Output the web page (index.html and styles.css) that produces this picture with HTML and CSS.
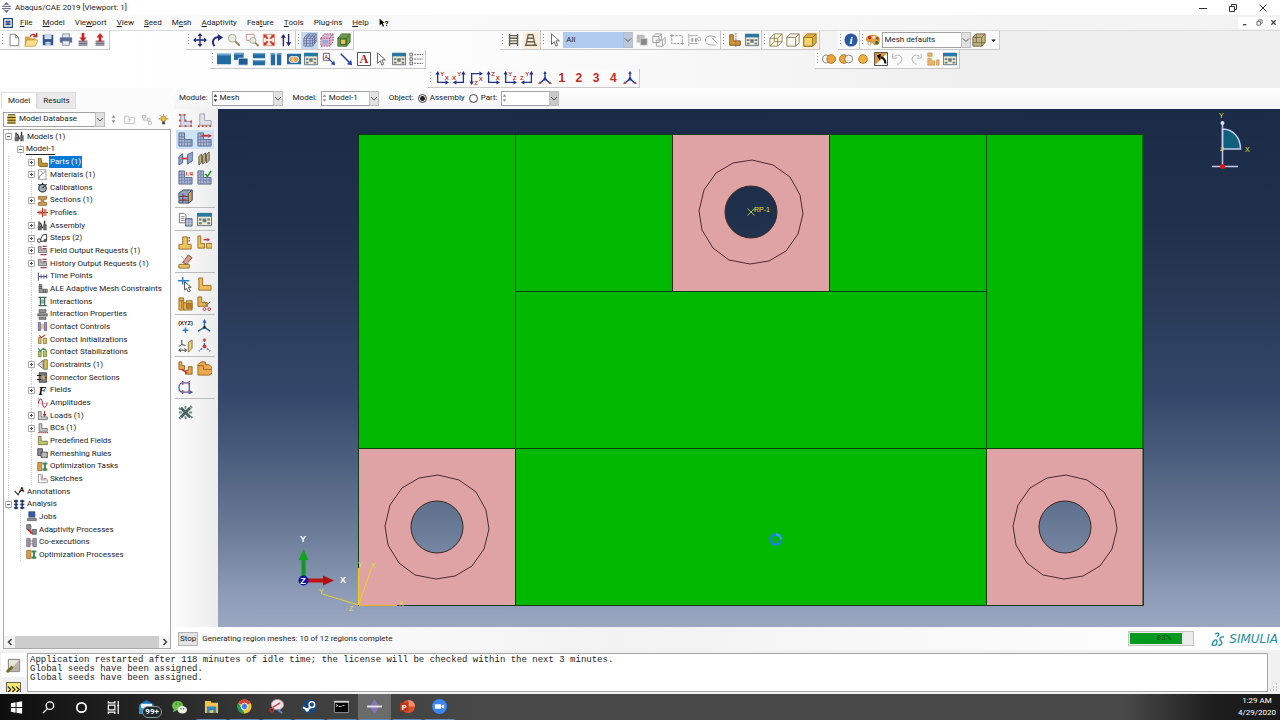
FILE: index.html
```html
<!DOCTYPE html>
<html lang="en">
<head>
<meta charset="utf-8">
<title>Abaqus/CAE 2019 [Viewport: 1]</title>
<link rel="stylesheet" href="styles.css">
</head>
<body>
<svg class="defs" aria-hidden="true">
  <!-- general -->
  <symbol id="app" viewBox="0 0 16 16"><path d="M8 0l3 3v2l2 0 3 3-3 3h-2v2l-3 3-3-3v-2H3L0 8l3-3h2V3z" fill="#77759c"/><path d="M0 8h16M5 5h6M5 11h6" stroke="#fff" stroke-width="1.4"/></symbol>
  <symbol id="doc" viewBox="0 0 16 16"><path d="M1 1h14v14H1z" fill="#fff" stroke="#27457f" stroke-width="2"/><path d="M4 6h8M4 10h8" stroke="#27457f" stroke-width="3"/></symbol>
  <symbol id="chev" viewBox="0 0 8 8"><path d="M1 2.500l3 3 3-3" fill="none" stroke="#555"/></symbol>
  <symbol id="new" viewBox="0 0 16 16"><path d="M3.500 1.500h6l4 4v9h-10z" fill="#fff" stroke="#777"/><path d="M9.500 1.500v4h4" fill="none" stroke="#777"/></symbol>
  <symbol id="open" viewBox="0 0 16 16"><path d="M1 4h5l1 2h6v9H1z" fill="#d9a53f"/><path d="M3 8h13l-3 7H1z" fill="#ffe08a" stroke="#a87c20" stroke-width=".6"/><path d="M7 4c2-3 5-3 6-1M14.500 0v4h-4" fill="none" stroke="#b3261e" stroke-width="1.500"/></symbol>
  <symbol id="save" viewBox="0 0 16 16"><path d="M2 2h12v12H2z" fill="#31538b"/><path d="M4 2h8v5H4z" fill="#cfdbe8"/><path d="M5 10h6v4H5z" fill="#b9c8d8"/></symbol>
  <symbol id="print" viewBox="0 0 16 16"><path d="M4 1h8v5H4z" fill="#dfe5ee" stroke="#68708c" stroke-width=".8"/><path d="M1 5h14v6H1z" fill="#5e6b9a"/><path d="M4 9h8v5H4z" fill="#e8ecf4" stroke="#68708c" stroke-width=".8"/></symbol>
  <symbol id="dbin" viewBox="0 0 16 16"><path d="M3 8h10v6H3z" fill="#b9b9c2"/><path d="M3 10h10M3 12h10M3 14h10" stroke="#55566a" stroke-width=".9"/><path d="M6.500 0h3v5H12L8 10 4 5h2.500z" fill="#d3201c"/></symbol>
  <symbol id="dbout" viewBox="0 0 16 16"><path d="M3 8h10v6H3z" fill="#b9b9c2"/><path d="M3 10h10M3 12h10M3 14h10" stroke="#55566a" stroke-width=".9"/><path d="M6.500 10h3V5H12L8 0 4 5h2.500z" fill="#d3201c"/></symbol>
  <!-- view manipulation -->
  <symbol id="pan" viewBox="0 0 16 16"><path d="M8 2v12M2 8h12" stroke="#262a76" stroke-width="1.500"/><path d="M8 0l3 3.500H5zM8 16l3-3.500H5zM0 8l3.500-3v6zM16 8l-3.500-3v6z" fill="#262a76"/></symbol>
  <symbol id="rot" viewBox="0 0 16 16"><path d="M5 15C1 9 5 4 10 5" fill="none" stroke="#262a76" stroke-width="2.200"/><path d="M9 1l6 4-6 4z" fill="#262a76"/></symbol>
  <symbol id="mag" viewBox="0 0 16 16"><circle cx="6" cy="6" r="4.500" fill="#e6ebe0" stroke="#a6a78e"/><path d="M9.500 9.500l5 5" stroke="#9d7a50" stroke-width="2.200"/></symbol>
  <symbol id="magbox" viewBox="0 0 16 16"><path d="M1.500 1.500h9v7h-9z" fill="none" stroke="#c88"/><circle cx="9" cy="8.500" r="3.500" fill="#e6ebe0" stroke="#a6a78e"/><path d="M11.500 11l4 4" stroke="#9d7a50" stroke-width="2"/></symbol>
  <symbol id="fit" viewBox="0 0 16 16"><path d="M1.500 1.500h13v13h-13z" fill="#ffe9df" stroke="#d8957c"/><path d="M3 3l3.500 3.500M13 3L9.500 6.500M3 13l3.500-3.500M13 13L9.500 9.500" stroke="#c9302c" stroke-width="2"/><path d="M2 2h4L2 6zM14 2h-4l4 4zM2 14h4l-4-4zM14 14h-4l4-4z" fill="#c9302c"/></symbol>
  <symbol id="updn" viewBox="0 0 16 16"><path d="M5 15V4M11 1v11" stroke="#262a76" stroke-width="1.600"/><path d="M5 1l3 4.500H2zM11 15l3-4.500H8z" fill="#262a76"/></symbol>
  <symbol id="meshcube" viewBox="0 0 16 16"><path d="M5 1h10v9l-4 5H1V6z" fill="#b8c8e6"/><path d="M1 6h10v9H1zM1 6l4-5h10l-4 5M15 1v9l-4 5M4 6v9M8 6v9M1 9h10M1 12h10M3 3.500h10M13 3.500v9M8 1L4 6M12 1L8 6M11 9l4-4M11 12l4-4" fill="none" stroke="#4f5f8b" stroke-width=".8"/></symbol>
  <symbol id="pinkcube" viewBox="0 0 16 16"><path d="M5 1h10v9l-4 5H1V6z" fill="#d8b7cf"/><path d="M1 6h10v9H1zM1 6l4-5h10l-4 5M15 1v9l-4 5" fill="none" stroke="#a2527f" stroke-dasharray="2 1"/><path d="M3 8h6v5H3z" fill="#9aa9d8"/></symbol>
  <symbol id="greencube" viewBox="0 0 16 16"><path d="M5 1h10v9l-4 5H1V6z" fill="#6e9d4c" stroke="#3f6b2c"/><path d="M1 6h10v9M11 6l4-5" fill="none" stroke="#3f6b2c"/><path d="M4 7h6v6H4z" fill="#e3c65e" stroke="#3b5f2b"/></symbol>
  <!-- windows -->
  <symbol id="w1" viewBox="0 0 16 16"><path d="M0 2h16v12H0z" fill="#266aa4"/><path d="M0 2h16v2H0z" fill="#6ba2cb"/></symbol>
  <symbol id="w2" viewBox="0 0 16 16"><path d="M0 1h11v8H0z" fill="#266aa4"/><path d="M5 7h11v8H5z" fill="#1e5c93" stroke="#d5e6f3"/><path d="M0 1h11v2H0z" fill="#6ba2cb"/></symbol>
  <symbol id="w3" viewBox="0 0 16 16"><path d="M1 1h14v6H1zM1 9h14v6H1z" fill="#266aa4"/><path d="M1 1h14v1.500H1zM1 9h14v1.500H1z" fill="#6ba2cb"/></symbol>
  <symbol id="w4" viewBox="0 0 16 16"><path d="M2 1h5v14H2zM9 1h5v14H9z" fill="#266aa4"/><path d="M2 1h5v2H2zM9 1h5v2H9z" fill="#6ba2cb"/></symbol>
  <symbol id="w5" viewBox="0 0 16 16"><path d="M0 2h16v12H0z" fill="#266aa4"/><circle cx="6" cy="8.500" r="3.500" fill="#e6a24b" stroke="#fff"/><circle cx="10" cy="8.500" r="3.500" fill="#e6a24b" stroke="#fff"/></symbol>
  <symbol id="form" viewBox="0 0 16 16"><path d="M.5 1.500h15v13H.5z" fill="#eee9cf" stroke="#5d6d79"/><path d="M0 1h16v4H0z" fill="#2878a6"/><path d="M2 7h3v2H2zM6 7h4v4H6zM11 7h3v2h-3zM2 11h3v2H2zM11 11h3v2h-3z" fill="#6a7c86"/></symbol>
  <symbol id="abox" viewBox="0 0 16 16"><path d="M1.500 1.500h7v8h-7z" fill="#fff" stroke="#555"/><text x="2.500" y="8.500" font-size="7" fill="#8a1c1c">A</text><path d="M7 7l6 6" stroke="#2747a0" stroke-width="1.500"/><path d="M15 15l-1-5-4 4z" fill="#2747a0"/></symbol>
  <symbol id="diag" viewBox="0 0 16 16"><path d="M2 2l10 10" stroke="#2747a0" stroke-width="1.800"/><path d="M15 15l-1-6-5 5z" fill="#2747a0"/></symbol>
  <symbol id="abig" viewBox="0 0 16 16"><path d="M.5 .5h15v15H.5z" fill="#fff" stroke="#333"/><text x="8" y="13" font-size="14" font-weight="bold" text-anchor="middle" font-family="Liberation Serif, serif" fill="#b01818">A</text></symbol>
  <symbol id="cursor" viewBox="0 0 16 16"><path d="M4 1v12l3-3 2 5 2-1-2-5h4z" fill="#fff" stroke="#555"/></symbol>
  <symbol id="list" viewBox="0 0 16 16"><path d="M1 1.500h3v3H1zM1 6.500h3v3H1zM1 11.500h3v3H1z" fill="none" stroke="#666"/><path d="M6 3h10M6 8h10M6 13h10" stroke="#555" stroke-dasharray="2 1"/></symbol>
  <!-- selection -->
  <symbol id="lad" viewBox="0 0 16 16"><path d="M3 1v14M12 1v14M2 3h11M2 6h11M2 9h11M2 12h11" stroke="#68604a" stroke-width="1.500"/></symbol>
  <symbol id="lad2" viewBox="0 0 16 16"><path d="M5 1L2 15M10 1l3 14M5 2h5M4 6h7M3 10h9M1 14h14" stroke="#68604a" stroke-width="1.500"/></symbol>
  <symbol id="sq2" viewBox="0 0 16 16"><path d="M2 2h9v9H2z" fill="#bbb"/><path d="M6 6h8v8H6z" fill="#888" stroke="#ddd"/></symbol>
  <symbol id="cubes" viewBox="0 0 16 16"><path d="M1 4h7v7H1zM1 4l3-3h7L8 4M11 1v6l-3 4M5 8h7v7H5zM12 8l3-3v7l-3 3" fill="none" stroke="#999"/></symbol>
  <symbol id="rubber" viewBox="0 0 16 16"><path d="M2 3h12v9H2z" fill="none" stroke="#999" stroke-dasharray="3 1"/><path d="M0 3h4M2 1v4M12 12h4M14 10v4" stroke="#999"/></symbol>
  <symbol id="rubber2" viewBox="0 0 16 16"><path d="M2 1v14M2 3h10M2 12h10" stroke="#aaa"/><path d="M5 6h2v4H5zM9 6h2v4H9z" fill="#999"/><circle cx="14" cy="7" r="2" fill="none" stroke="#aaa"/></symbol>
  <symbol id="lasso" viewBox="0 0 16 16"><path d="M2 10c-2-5 4-9 12-5M2 11c4 4 7 2 11 3M9 5l6 7" fill="none" stroke="#999"/></symbol>
  <symbol id="lpart" viewBox="0 0 16 16"><path d="M2 2h4v7h8v5H2z" fill="#d79a32" stroke="#6b4914"/><path d="M9 0v16" stroke="#c33" stroke-dasharray="2 1"/></symbol>
  <symbol id="wire" viewBox="0 0 16 16"><path d="M1 6h9v9H1zM6 1h9v9H6zM1 6l5-5M10 6l5-5M1 15l5-5M10 15l5-5" fill="#fff8dd" stroke="#80724a" stroke-width=".9"/></symbol>
  <symbol id="hidden" viewBox="0 0 16 16"><path d="M1 5h10v10H1zM1 5l4-4h10v10l-4 4M11 5l4-4" fill="#fdfaf0" stroke="#80724a"/></symbol>
  <symbol id="solid" viewBox="0 0 16 16"><path d="M1 5l4-4h10v10l-4 4H1z" fill="#e3b23a" stroke="#8a6a1a"/><path d="M1 5h10v10H1z" fill="#f6d469" stroke="#8a6a1a"/><path d="M11 5l4-4" stroke="#8a6a1a"/></symbol>
  <symbol id="info" viewBox="0 0 16 16"><circle cx="8" cy="8" r="7.500" fill="#2a58a6"/><text x="8" y="12.500" font-size="13" font-style="italic" font-weight="bold" text-anchor="middle" font-family="Liberation Serif, serif" fill="#fff">i</text></symbol>
  <symbol id="palette" viewBox="0 0 16 16"><path d="M8 2c5 0 8 3 8 6s-2 6-5 6-2-3-5-3-6-1-6-4 3-5 8-5z" fill="#e39b3d"/><circle cx="4" cy="5" r="2" fill="#c42c22"/><circle cx="9" cy="5" r="1.700" fill="#eee"/><circle cx="12.500" cy="11" r="2" fill="#2c6b35"/><circle cx="4" cy="12" r="2" fill="#e9e2c8" stroke="#777" stroke-width=".5"/><circle cx="13" cy="6" r="1.500" fill="#7d4b24"/></symbol>
  <symbol id="khaki" viewBox="0 0 16 16"><path d="M1 5l4-4h10v10l-4 4H1z" fill="#c2b280" stroke="#6b603a"/><path d="M1 5h10v10M11 5l4-4M5 1v10H1M5 11h10" fill="none" stroke="#6b603a" stroke-width=".8"/></symbol>
  <symbol id="caret" viewBox="0 0 8 16"><path d="M0 6h8l-4 5z" fill="#111"/></symbol>
  <symbol id="venn1" viewBox="0 0 16 16"><circle cx="5" cy="8" r="4.500" fill="#fff" stroke="#777"/><circle cx="10.500" cy="8" r="5" fill="#eba53a" stroke="#9d7327"/></symbol>
  <symbol id="venn2" viewBox="0 0 16 16"><circle cx="5.500" cy="8" r="5" fill="#eba53a" stroke="#9d7327"/><circle cx="11" cy="8" r="4.500" fill="#fff" fill-opacity=".8" stroke="#777"/></symbol>
  <symbol id="ball" viewBox="0 0 16 16"><circle cx="8" cy="8" r="5" fill="#efb03c" stroke="#a87a27"/></symbol>
  <symbol id="repl" viewBox="0 0 16 16"><path d="M.5 .5h15v15H.5z" fill="#fff" stroke="#333"/><path d="M1 1h14L1 15z" fill="#dc9430"/><path d="M13 13c0-4-2-6-5-7" fill="none" stroke="#111" stroke-width="2.500"/><path d="M8 2L3 4l4 6z" fill="#111"/></symbol>
  <symbol id="undo" viewBox="0 0 16 16"><path d="M4 5c5-4 10 1 8 5-1 2-3 4-5 4M2 2v5h5" fill="none" stroke="#aaa"/></symbol>
  <symbol id="redo" viewBox="0 0 16 16"><path d="M12 5C7 1 2 6 4 10c1 2 3 4 5 4M14 2v5H9" fill="none" stroke="#aaa"/></symbol>
  <symbol id="parts" viewBox="0 0 16 16"><path d="M2 1h5v4H2zM2 7h4v3h4v5H2zM12 9h3v6h-3z" fill="#e5b46a" stroke="#bb8332" stroke-width=".6"/></symbol>
  <!-- axis views -->
  <symbol id="axL" viewBox="0 0 16 16"><path d="M3 3v10h10" fill="none" stroke="#23348a" stroke-width="1.500"/><path d="M3 0l2.500 4h-5zM16 13l-4-2.500v5z" fill="#23348a"/></symbol>
  <symbol id="axR" viewBox="0 0 16 16"><path d="M13 3v10H4" fill="none" stroke="#23348a" stroke-width="1.500"/><path d="M13 0l2.500 4h-5zM1 13l4-2.500v5z" fill="#23348a"/></symbol>
  <symbol id="axD" viewBox="0 0 16 16"><path d="M3 13V3h10" fill="none" stroke="#23348a" stroke-width="1.500"/><path d="M3 16l2.500-4h-5zM16 3l-4-2.500v5z" fill="#23348a"/></symbol>
  <symbol id="tri" viewBox="0 0 16 16"><path d="M8 2v7l-6 5M8 9l6 5" fill="none" stroke="#23348a" stroke-width="1.500"/><path d="M8 0l2 3H6z" fill="#23348a"/><path d="M0 15l2-3 2 2zM16 15l-2-3-2 2z" fill="#b5382d"/><circle cx="8" cy="9" r="1.800" fill="#23348a"/></symbol>
  <!-- toolbox and model tree -->
  <symbol id="seed" viewBox="0 0 16 16"><path d="M3 2h4v7h7v5H3z" fill="#d5dbea" stroke="#9097ad"/><path d="M1 1h2v2H1zM6 1h2v2H6zM1 7h2v2H1zM1 13h2v2H1zM7 13h2v2H7zM13 13h2v2h-2zM13 8h2v2h-2zM7 7h2v2H7z" fill="#d8403a"/></symbol>
  <symbol id="seed2" viewBox="0 0 16 16"><path d="M3 1h5v7h7v5H3z" fill="#dfe2ec" stroke="#a0a4b2"/><path d="M1 13h2v2H1zM5 13h2v2H5zM9 13h2v2H9zM13 13h2v2h-2z" fill="#d8403a"/></symbol>
  <symbol id="meshL" viewBox="0 0 16 16"><path d="M1 1h6v7h8v7H1z" fill="#a9b8d6" stroke="#5b6a8a"/><path d="M4 1v14M1 5h6M1 8h14M1 11h14M7 8v7M10 8v7M13 8v7" stroke="#64749a" stroke-width=".7"/></symbol>
  <symbol id="meshred" viewBox="0 0 16 16"><use href="#meshL"/><path d="M5 4h7" stroke="#d02b2b" stroke-width="2"/><path d="M16 4l-4-2v4z" fill="#d02b2b"/></symbol>
  <symbol id="meshnum" viewBox="0 0 16 16"><use href="#meshL"/><path d="M9 2v4M11 5.500h.8M13 2v3h2.500M15 2v4" fill="none" stroke="#d8352b"/></symbol>
  <symbol id="meshok" viewBox="0 0 16 16"><use href="#meshL"/><path d="M9 4l2 3 4-6" fill="none" stroke="#2f8a2f" stroke-width="1.600"/></symbol>
  <symbol id="assoc" viewBox="0 0 16 16"><path d="M1 6l4-3v9l-4 3zM10 4l6-3v9l-6 4z" fill="#8fa3c9" stroke="#4d608c"/><path d="M4 8h6" stroke="#c33" stroke-width="2"/></symbol>
  <symbol id="stack" viewBox="0 0 16 16"><path d="M2 6l3-3v9l-3 3zM6 5l3-3v9l-3 3zM10 4l3-3v9l-3 3z" fill="#c8b26a" stroke="#555"/></symbol>
  <symbol id="brick" viewBox="0 0 16 16"><path d="M1 4l5-3h9v11l-4 3H1z" fill="#8fa2c4" stroke="#4a4f60"/><path d="M11 5l4-4v11l-4 3z" fill="#d0a652" stroke="#4a4f60"/><path d="M1 8h10M1 12h10M5 5v10" stroke="#4a4f60"/><path d="M5 6l4 1.500L5 9zM5 10l4 1.500L5 13z" fill="#d22"/></symbol>
  <symbol id="copy" viewBox="0 0 16 16"><path d="M1.500 1.500h5l2 2v8h-7z" fill="#fff" stroke="#777"/><path d="M3 5h4M3 7h4M3 9h4" stroke="#888"/><path d="M8 7h7v8H8z" fill="#8796b4" stroke="#5b6885"/><path d="M10 7v8M13 7v8M8 10h7M8 12.500h7" stroke="#dfe5f0" stroke-width=".6"/></symbol>
  <symbol id="gold" viewBox="0 0 16 16"><path d="M5 2h5v8h4v5H1v-5h4z" fill="#edc45d" stroke="#94702c"/></symbol>
  <symbol id="goldr" viewBox="0 0 16 16"><use href="#gold"/><path d="M12 2v6" stroke="#c33" stroke-width="1.600" stroke-dasharray="2 1"/></symbol>
  <symbol id="golda" viewBox="0 0 16 16"><path d="M1 1h3v8h4v5H1zM10 9h6v5h-6z" fill="#edc45d" stroke="#94702c"/><path d="M7 5h5" stroke="#c33" stroke-width="1.500"/><path d="M14 5l-3-2v4z" fill="#c33"/></symbol>
  <symbol id="erase" viewBox="0 0 16 16"><path d="M1 11h11v4H1z" fill="#edc45d" stroke="#94702c"/><path d="M5 9l6-8 4 3-6 7z" fill="#d9988c" stroke="#77584f"/><path d="M3 2l8 8" stroke="#bba" stroke-width=".8"/></symbol>
  <symbol id="pick" viewBox="0 0 16 16"><path d="M0 4h12M5 0v8" stroke="#2a7ec6" stroke-width="1.500"/><path d="M7 5v9l2-2 2 4 2-1-2-4h3z" fill="#fff" stroke="#444"/></symbol>
  <symbol id="goldL" viewBox="0 0 16 16"><path d="M2 1h4v8h9v5H2z" fill="#f0bb58" stroke="#9c6f28"/></symbol>
  <symbol id="goldb" viewBox="0 0 16 16"><path d="M1 2h5v5h3V5h6v10H1z" fill="#eab04d" stroke="#94702c"/><path d="M4 5v9M1 5h5M6 7v8M9 8h6v5H9z" stroke="#94702c" fill="#c87822"/></symbol>
  <symbol id="cut" viewBox="0 0 16 16"><path d="M1 1h4v6h6v4H1z" fill="#eab04d" stroke="#94702c"/><path d="M7 5l5 7M14 6l-5 6" stroke="#777"/><circle cx="8" cy="14" r="1.500" fill="none" stroke="#c33"/><circle cx="13" cy="14" r="1.500" fill="none" stroke="#c33"/></symbol>
  <symbol id="xyz" viewBox="0 0 16 16"><text x="8" y="6" font-size="6" font-weight="bold" text-anchor="middle" font-family="Liberation Sans, sans-serif" fill="#222">(XYZ)</text><path d="M8 9v6M5 12h6" stroke="#2a7ec6" stroke-width="1.600"/></symbol>
  <symbol id="datum" viewBox="0 0 16 16"><path d="M8 1v8l-7 4M8 9l6 4" stroke="#27708d" stroke-width="1.500" fill="none"/><path d="M8 0l2 4H6z" fill="#2a5ec0"/><circle cx="8" cy="9" r="1.500" fill="#222"/></symbol>
  <symbol id="plane" viewBox="0 0 16 16"><path d="M4 2v5l-3 2M4 7l4 1M1 13h8M3 11l-2 2 2 2M7 11l2 2-2 2" fill="none" stroke="#333"/><path d="M11 5l4-3v9l-4 4z" fill="#e8cf7e" stroke="#8b7432"/></symbol>
  <symbol id="dots" viewBox="0 0 16 16"><path d="M8 2v7l-6 5M8 9l6 5" fill="none" stroke="#2a5ec0" stroke-dasharray="2 1.500" stroke-width="1.500"/><circle cx="8" cy="2" r="1.500" fill="#d33"/><circle cx="8" cy="9" r="2" fill="#d33"/></symbol>
  <symbol id="bridge" viewBox="0 0 16 16"><path d="M1 1h3v4h3v4H1zM11 6h4v8H8v-4h3z" fill="#eaa54d" stroke="#8d6427"/><path d="M4 9l6 4" stroke="#c33" stroke-width="1.500"/></symbol>
  <symbol id="block" viewBox="0 0 16 16"><path d="M1 4l3-3h5v3h4l3 3v6l-3 2H1z" fill="#efaa4d" stroke="#976723"/><path d="M1 5h6v4h9" fill="none" stroke="#976723"/></symbol>
  <symbol id="loop" viewBox="0 0 16 16"><path d="M12 3H5C2 3 1 6 1 8s1 5 4 5h9M12 3v9" fill="none" stroke="#3d5aa8" stroke-width="1.300"/><path d="M5 1v4M12 1v4M5 11v4M12 11v4" stroke="#c33" stroke-width="1.600" stroke-dasharray="1.500 1"/><path d="M16 13l-3-2v4z" fill="#3d5aa8"/></symbol>
  <symbol id="tools" viewBox="0 0 16 16"><path d="M3 3l10 10M13 3L3 13" stroke="#476560" stroke-width="3"/><path d="M1 8h3M12 8h3M8 1v3M8 12v3M1 3l2 2M13 1l2 2M1 13l2 2M14 12l1 2" stroke="#6f8a84" stroke-width="2"/></symbol>
  <symbol id="plus" viewBox="0 0 7 7"><path d="M.5 .5h6v6h-6z" fill="#fff" stroke="#aaa"/><path d="M2 3.500h3M3.500 2v3" stroke="#555"/></symbol>
  <symbol id="minus" viewBox="0 0 7 7"><path d="M.5 .5h6v6h-6z" fill="#fff" stroke="#aaa"/><path d="M2 3.500h3" stroke="#555"/></symbol>
  <symbol id="tdb" viewBox="0 0 16 16"><path d="M2 2h12v12H2z" fill="#d9b33a"/><path d="M2 5h12M2 9h12M2 13h12M3 1h10" stroke="#4b4122" stroke-width="1.500"/></symbol>
  <symbol id="tmod" viewBox="0 0 16 16"><path d="M1 8h6v7H1zM9 6h5v9H9z" fill="#666"/><path d="M3 2v6M11 1v6M5 4l3 8" stroke="#333" stroke-width="2"/></symbol>
  <symbol id="tpart" viewBox="0 0 16 16"><path d="M2 2h4l1 7h8v5H4l-2-2z" fill="#c69528" stroke="#5a4211"/></symbol>
  <symbol id="tmat" viewBox="0 0 16 16"><path d="M2 1v14h13M2 1h11v14" fill="none" stroke="#777"/><path d="M3 14C5 5 9 9 12 3M5 3l3 2" fill="none" stroke="#555"/></symbol>
  <symbol id="tcal" viewBox="0 0 16 16"><circle cx="8" cy="9" r="5.500" fill="#9cb0c2" stroke="#333" stroke-width="1.600"/><path d="M8 9l3-3M8 1v3M2 3l2 2M14 3l-2 2" stroke="#222" stroke-width="1.500"/></symbol>
  <symbol id="tsec" viewBox="0 0 16 16"><path d="M2 2h12v4h-4v5h4v4H2v-4h4V6H2z" fill="#d29c50" stroke="#745022"/></symbol>
  <symbol id="tpro" viewBox="0 0 16 16"><path d="M2 5h5v6H2zM9 3h5v10H9z" fill="#dc8c74"/><path d="M0 8h16M8 1v14" stroke="#a5432f" stroke-width="1.500"/></symbol>
  <symbol id="tstep" viewBox="0 0 16 16"><circle cx="3" cy="11" r="2.500" fill="none" stroke="#333" stroke-width="1.400"/><circle cx="12" cy="11" r="2.500" fill="#555"/><path d="M5 10l3-7 6-1v8M5 12h5" fill="none" stroke="#333" stroke-width="1.400"/></symbol>
  <symbol id="tout" viewBox="0 0 16 16"><path d="M2 2h4v5h8v4H2z" fill="#bbb" stroke="#555"/><path d="M8 2h6M8 5h6M5 14h9" stroke="#a33f4c" stroke-width="1.500"/></symbol>
  <symbol id="ttime" viewBox="0 0 16 16"><path d="M2 2v12M2 8h13M6 5v6M10 5v6M14 5v6" stroke="#55608c" stroke-width="1.500"/></symbol>
  <symbol id="tL" viewBox="0 0 16 16"><path d="M3 2h4v7h8v5H3z" fill="#999" stroke="#555"/><path d="M3 5h4M3 8h4M9 9v5M12 9v5" stroke="#444"/></symbol>
  <symbol id="tint" viewBox="0 0 16 16"><path d="M2 2h12M2 14h12M5 3v10M11 3v10" stroke="#466" stroke-width="2"/><path d="M6 5h4v6H6z" fill="#7bb28a"/></symbol>
  <symbol id="tintp" viewBox="0 0 16 16"><path d="M3 1h10v4H3zM1 7h14v3H1zM3 12h10v3H3z" fill="#999" stroke="#444"/></symbol>
  <symbol id="tcon" viewBox="0 0 16 16"><path d="M2 2h3v12H2zM11 2h3v12h-3z" fill="#a58ac0" stroke="#55508a"/><path d="M6 4h4v8H6z" fill="#e5c65a"/></symbol>
  <symbol id="tcon2" viewBox="0 0 16 16"><path d="M2 5h4v9H2zM9 6h5v8H9z" fill="#d4bc66" stroke="#807036"/><path d="M3 2l4 3 5-4" fill="none" stroke="#b33" stroke-width="1.500"/></symbol>
  <symbol id="tcon3" viewBox="0 0 16 16"><path d="M2 6h4v8H2zM9 6h5v8H9z" fill="#b9c45e" stroke="#607036"/><path d="M2 2l3 4 4-4 5 3" fill="none" stroke="#384" stroke-width="1.500"/></symbol>
  <symbol id="tcst" viewBox="0 0 16 16"><path d="M1 8l8-6v12z" fill="#ddd" stroke="#444"/><path d="M10 1h5v14h-5z" fill="#dfc552" stroke="#555"/></symbol>
  <symbol id="tcs" viewBox="0 0 16 16"><path d="M3 1h11v14H3z" fill="#777" stroke="#333"/><path d="M0 5h6M0 11h6M6 8h8" stroke="#222" stroke-width="1.500"/><circle cx="9" cy="8" r="3" fill="#c9a070"/></symbol>
  <symbol id="tf" viewBox="0 0 16 16"><text x="8" y="14" font-size="17" font-weight="bold" font-style="italic" text-anchor="middle" font-family="Liberation Serif, serif">F</text></symbol>
  <symbol id="tamp" viewBox="0 0 16 16"><path d="M2 1v13M2 9h13" stroke="#999"/><path d="M2 9c2-8 5-8 6 0s5 8 7-1" fill="none" stroke="#b33a4a" stroke-width="1.500"/></symbol>
  <symbol id="tload" viewBox="0 0 16 16"><path d="M2 2h4v8h9v4H2z" fill="#ccc" stroke="#555"/><path d="M11 1v8M9 6l2 3 2-3" stroke="#a33" fill="none" stroke-width="1.500"/></symbol>
  <symbol id="tbc" viewBox="0 0 16 16"><path d="M3 1h4v7h8v4H3z" fill="#ccc" stroke="#555"/><path d="M2 14h14" stroke="#a33" stroke-width="2" stroke-dasharray="2 1"/></symbol>
  <symbol id="tpre" viewBox="0 0 16 16"><path d="M2 2h4v7h9v5H2z" fill="#c4cc58" stroke="#555"/></symbol>
  <symbol id="trem" viewBox="0 0 16 16"><path d="M1 1h7v10H1z" fill="#889" stroke="#333"/><path d="M6 6h9v8H6z" fill="#999" stroke="#222"/><path d="M9 6v8M12 6v8M6 10h9" stroke="#ddd"/></symbol>
  <symbol id="topt" viewBox="0 0 16 16"><path d="M1 2h6v12H1z" fill="#d89b48" stroke="#936126"/><path d="M8 2h7v3h-2v6h2v3H8v-3h2V5H8z" fill="#3f8557"/></symbol>
  <symbol id="tsk" viewBox="0 0 16 16"><path d="M2 2h4v8h9v4H2z" fill="#fff" stroke="#777"/><path d="M8 2v6h6" fill="none" stroke="#b66"/></symbol>
  <symbol id="tann" viewBox="0 0 16 16"><path d="M1 7l5 6 3-6" fill="none" stroke="#222" stroke-width="1.500"/><text x="8" y="9" font-size="10" font-weight="bold">A</text></symbol>
  <symbol id="tana" viewBox="0 0 16 16"><path d="M3 1v14M12 1v14M0 3h6M0 8h6M0 13h6M9 3h6M9 8h6M9 13h6" stroke="#283a78" stroke-width="2.400"/></symbol>
  <symbol id="tjob" viewBox="0 0 16 16"><path d="M4 1h9v8H4z" fill="#3557b5" stroke="#555"/><path d="M2 11h13v3H2z" fill="#88909c" stroke="#555"/></symbol>
  <symbol id="tada" viewBox="0 0 16 16"><path d="M1 1h6v7H1zM9 8h6v7H9z" fill="#8a8a9a" stroke="#444"/><path d="M3 9l6 4M7 9v5" stroke="#c22" stroke-width="2"/></symbol>
  <symbol id="tcoe" viewBox="0 0 16 16"><path d="M1 2h5v12H1zM10 2h5v12h-5z" fill="#99a" stroke="#667"/><path d="M5 6h6M5 10h6" stroke="#a44"/></symbol>
  <symbol id="bulb" viewBox="0 0 16 16"><circle cx="8" cy="7" r="4" fill="#f0c23c" stroke="#8a6d1c"/><path d="M6 11h4v4H6z" fill="#444"/><path d="M8 0v2M1 7h2M13 7h2M3 2l1 1M13 2l-1 1" stroke="#444"/></symbol>
  <symbol id="spin" viewBox="0 0 8 16"><path d="M1 6l3-4 3 4zM1 10l3 4 3-4z" fill="currentColor"/></symbol>
  <symbol id="fup" viewBox="0 0 16 16"><path d="M1 3h5l1 2h8v9H1zM8 12V7M6 9l2-2 2 2" fill="none" stroke="#aaa"/></symbol>
  <symbol id="flt" viewBox="0 0 16 16"><path d="M2 2h5v4H2zM9 6h4v4H9zM11 11h4v4h-4zM4 6v3h5" fill="none" stroke="#aaa"/></symbol>
</svg>

<header class="titlebar">
  <svg class="i11"><use href="#app"/></svg>
  <h1>Abaqus/CAE 2019 [Viewport: 1]</h1>
  <div class="winbtns">
    <button aria-label="Minimize"><svg viewBox="0 0 8 8"><path d="M0 4.500h8" stroke="#333"/></svg></button>
    <button aria-label="Restore"><svg viewBox="0 0 8 8"><path d="M.5 2.500h5v5h-5zM2.500 2V.5h5v5H6" fill="none" stroke="#333"/></svg></button>
    <button aria-label="Close"><svg viewBox="0 0 8 8"><path d="M.5 .5l7 7M7.500 .5l-7 7" stroke="#333"/></svg></button>
  </div>
</header>

<nav class="menubar" aria-label="Main menu">
  <svg class="i10"><use href="#doc"/></svg>
  <button><u>F</u>ile</button><button><u>M</u>odel</button><button>Vie<u>w</u>port</button><button><u>V</u>iew</button><button><u>S</u>eed</button><button>M<u>e</u>sh</button><button><u>A</u>daptivity</button><button>Fea<u>t</u>ure</button><button><u>T</u>ools</button><button>Plu<u>g</u>-ins</button><button><u>H</u>elp</button><button aria-label="Context help"><svg class="i10" viewBox="0 0 16 16"><path d="M1 1v11l3-3 2 5 2-1-2-5h3z"/><text x="9" y="12" font-size="12" font-weight="bold">?</text></svg></button>
  <div class="mdibtns">
    <button aria-label="Minimize viewport"><svg viewBox="0 0 8 8"><path d="M1 6.500h4" stroke="#444" stroke-width="1.500"/></svg></button>
    <button aria-label="Restore viewport"><svg viewBox="0 0 8 8"><path d="M1 3h4v4H1zM3 3V1h4v4H5" fill="none" stroke="#666"/></svg></button>
    <button aria-label="Close viewport"><svg viewBox="0 0 8 8"><path d="M1.500 1.500l5 5M6.500 1.500l-5 5" stroke="#444" stroke-width="1.500"/></svg></button>
  </div>
</nav>

<section class="toolbars" aria-label="Toolbars">
  <div class="tbrow">
    <div class="tb w110"><i class="grip"></i><button aria-label="New"><svg><use href="#new"/></svg></button><button aria-label="Open"><svg><use href="#open"/></svg></button><button aria-label="Save"><svg><use href="#save"/></svg></button><button aria-label="Print"><svg><use href="#print"/></svg></button><button aria-label="Import"><svg><use href="#dbin"/></svg></button><button aria-label="Export"><svg><use href="#dbout"/></svg></button></div>
    <div class="tb w110 from-file"><i class="grip"></i><button aria-label="Pan"><svg><use href="#pan"/></svg></button><button aria-label="Rotate"><svg><use href="#rot"/></svg></button><button aria-label="Magnify"><svg><use href="#mag"/></svg></button><button aria-label="Box zoom"><svg><use href="#magbox"/></svg></button><button aria-label="Auto-fit"><svg><use href="#fit"/></svg></button><button aria-label="Cycle views"><svg><use href="#updn"/></svg></button></div>
    <div class="tb w58"><i class="grip"></i><button class="on" aria-label="Mesh display"><svg><use href="#meshcube"/></svg></button><button aria-label="Seed display"><svg><use href="#pinkcube"/></svg></button><button aria-label="Geometry display"><svg><use href="#greencube"/></svg></button></div>
    <div class="tb w41 from-view"><i class="grip"></i><button aria-label="Parallel"><svg><use href="#lad"/></svg></button><button class="warm" aria-label="Perspective"><svg><use href="#lad2"/></svg></button></div>
    <div class="tb w180"><i class="grip"></i><button aria-label="Select"><svg><use href="#cursor"/></svg></button>
      <span class="combo blue"><select aria-label="Selection filter"><option>All</option></select><svg class="arrow"><use href="#chev"/></svg></span>
      <button aria-label="Highlight"><svg><use href="#sq2"/></svg></button><button aria-label="Pick closest"><svg><use href="#cubes"/></svg></button><button aria-label="Drag rectangle"><svg><use href="#rubber"/></svg></button><button aria-label="Selection inside"><svg><use href="#rubber2"/></svg></button><button aria-label="Lasso"><svg><use href="#lasso"/></svg></button></div>
    <div class="tb w41"><i class="grip"></i><button aria-label="Cut view"><svg><use href="#lpart"/></svg></button><button aria-label="View cut manager"><svg><use href="#form"/></svg></button></div>
    <div class="tb w58"><i class="grip"></i><button aria-label="Wireframe"><svg><use href="#wire"/></svg></button><button aria-label="Hidden line"><svg><use href="#hidden"/></svg></button><button class="warm" aria-label="Shaded"><svg><use href="#solid"/></svg></button></div>
    <div class="tb w22 from-render"><i class="grip"></i><button aria-label="Query"><svg><use href="#info"/></svg></button></div>
    <div class="tb w140"><i class="grip"></i><button aria-label="Color code"><svg><use href="#palette"/></svg></button>
      <span class="combo wide"><select aria-label="Color mapping"><option>Mesh defaults</option></select><svg class="arrow"><use href="#chev"/></svg></span>
      <button aria-label="Translucency"><svg><use href="#khaki"/></svg></button><button class="slim" aria-label="Translucency options"><svg class="car"><use href="#caret"/></svg></button></div>
  </div>
  <div class="tbrow">
    <div class="tb w216 from-edge"><i class="grip"></i><button aria-label="Single viewport"><svg><use href="#w1"/></svg></button><button aria-label="Cascade"><svg><use href="#w2"/></svg></button><button aria-label="Tile horizontally"><svg><use href="#w3"/></svg></button><button aria-label="Tile vertically"><svg><use href="#w4"/></svg></button><button aria-label="Link viewports"><svg><use href="#w5"/></svg></button><button aria-label="Viewport manager"><svg><use href="#form"/></svg></button><button aria-label="Text arrow"><svg><use href="#abox"/></svg></button><button aria-label="Arrow"><svg><use href="#diag"/></svg></button><button aria-label="Text"><svg><use href="#abig"/></svg></button><button aria-label="Edit annotation"><svg><use href="#cursor"/></svg></button><button aria-label="Annotation manager"><svg><use href="#form"/></svg></button><button aria-label="Annotation options"><svg><use href="#list"/></svg></button></div>
    <div class="tb w145 from-annot"><i class="grip"></i><button aria-label="Replace"><svg><use href="#venn1"/></svg></button><button aria-label="Remove"><svg><use href="#venn2"/></svg></button><button aria-label="Either"><svg><use href="#ball"/></svg></button><button aria-label="Replace all"><svg><use href="#repl"/></svg></button><button aria-label="Undo"><svg><use href="#undo"/></svg></button><button aria-label="Redo"><svg><use href="#redo"/></svg></button><button aria-label="Display group"><svg><use href="#parts"/></svg></button><button aria-label="Display group manager"><svg><use href="#form"/></svg></button></div>
  </div>
  <div class="tbrow">
    <div class="tb w212 from-far"><i class="grip"></i>
      <button aria-label="XY view"><svg viewBox="0 0 16 16"><use href="#axL"/><text class="ax" x="6" y="6">Y</text><text class="ax" x="11" y="10">X</text></svg></button>
      <button aria-label="YX view"><svg viewBox="0 0 16 16"><use href="#axR"/><text class="ax" x="6" y="6">Y</text><text class="ax" x="0" y="10">X</text></svg></button>
      <button aria-label="XZ view"><svg viewBox="0 0 16 16"><use href="#axD"/><text class="ax" x="11" y="11">X</text><text class="ax" x="6" y="16">Z</text></svg></button>
      <button aria-label="ZX view"><svg viewBox="0 0 16 16"><use href="#axL"/><text class="ax" x="6" y="6">Z</text><text class="ax" x="11" y="10">X</text></svg></button>
      <button aria-label="YZ view"><svg viewBox="0 0 16 16"><use href="#axL"/><text class="ax" x="6" y="6">Y</text><text class="ax" x="11" y="10">Z</text></svg></button>
      <button aria-label="ZY view"><svg viewBox="0 0 16 16"><use href="#axR"/><text class="ax" x="6" y="6">Y</text><text class="ax" x="0" y="10">Z</text></svg></button>
      <button aria-label="Isometric"><svg><use href="#tri"/></svg></button>
      <button class="num">1</button><button class="num">2</button><button class="num">3</button><button class="num">4</button>
      <button aria-label="Specify view"><svg><use href="#tri"/></svg></button></div>
  </div>
</section>

<main class="work">
  <aside class="side">
    <div class="tabs" role="tablist"><button role="tab" class="tab active" aria-selected="true">Model</button><button role="tab" class="tab" aria-selected="false">Results</button></div>
    <div class="dbrow">
      <span class="combo db"><svg class="i11"><use href="#tdb"/></svg><select aria-label="Database"><option>Model Database</option></select><svg class="arrow"><use href="#chev"/></svg></span>
      <button aria-label="Step"><svg class="spin gray"><use href="#spin"/></svg></button><button aria-label="Up"><svg class="i11"><use href="#fup"/></svg></button><button aria-label="Filter"><svg class="i11"><use href="#flt"/></svg></button><button aria-label="Tips"><svg class="i11"><use href="#bulb"/></svg></button>
    </div>
    <div class="treebox">
      <ul class="tree">
        <li class="l0"><svg class="ex"><use href="#minus"/></svg><svg class="ic"><use href="#tmod"/></svg><span>Models (1)</span></li>
        <li class="l1"><svg class="ex"><use href="#minus"/></svg><span class="current">Model-1</span></li>
        <li class="l2"><svg class="ex"><use href="#plus"/></svg><svg class="ic"><use href="#tpart"/></svg><span class="sel">Parts (1)</span></li>
        <li class="l2"><svg class="ex"><use href="#plus"/></svg><svg class="ic"><use href="#tmat"/></svg><span>Materials (1)</span></li>
        <li class="l2"><i class="ex"></i><svg class="ic"><use href="#tcal"/></svg><span>Calibrations</span></li>
        <li class="l2"><svg class="ex"><use href="#plus"/></svg><svg class="ic"><use href="#tsec"/></svg><span>Sections (1)</span></li>
        <li class="l2"><i class="ex"></i><svg class="ic"><use href="#tpro"/></svg><span>Profiles</span></li>
        <li class="l2"><svg class="ex"><use href="#plus"/></svg><svg class="ic"><use href="#tmod"/></svg><span>Assembly</span></li>
        <li class="l2"><svg class="ex"><use href="#plus"/></svg><svg class="ic"><use href="#tstep"/></svg><span>Steps (2)</span></li>
        <li class="l2"><svg class="ex"><use href="#plus"/></svg><svg class="ic"><use href="#tout"/></svg><span>Field Output Requests (1)</span></li>
        <li class="l2"><svg class="ex"><use href="#plus"/></svg><svg class="ic"><use href="#tout"/></svg><span>History Output Requests (1)</span></li>
        <li class="l2"><i class="ex"></i><svg class="ic"><use href="#ttime"/></svg><span>Time Points</span></li>
        <li class="l2"><i class="ex"></i><svg class="ic"><use href="#tL"/></svg><span>ALE Adaptive Mesh Constraints</span></li>
        <li class="l2"><i class="ex"></i><svg class="ic"><use href="#tint"/></svg><span>Interactions</span></li>
        <li class="l2"><i class="ex"></i><svg class="ic"><use href="#tintp"/></svg><span>Interaction Properties</span></li>
        <li class="l2"><i class="ex"></i><svg class="ic"><use href="#tcon"/></svg><span>Contact Controls</span></li>
        <li class="l2"><i class="ex"></i><svg class="ic"><use href="#tcon2"/></svg><span>Contact Initializations</span></li>
        <li class="l2"><i class="ex"></i><svg class="ic"><use href="#tcon3"/></svg><span>Contact Stabilizations</span></li>
        <li class="l2"><svg class="ex"><use href="#plus"/></svg><svg class="ic"><use href="#tcst"/></svg><span>Constraints (1)</span></li>
        <li class="l2"><i class="ex"></i><svg class="ic"><use href="#tcs"/></svg><span>Connector Sections</span></li>
        <li class="l2"><svg class="ex"><use href="#plus"/></svg><svg class="ic"><use href="#tf"/></svg><span>Fields</span></li>
        <li class="l2"><i class="ex"></i><svg class="ic"><use href="#tamp"/></svg><span>Amplitudes</span></li>
        <li class="l2"><svg class="ex"><use href="#plus"/></svg><svg class="ic"><use href="#tload"/></svg><span>Loads (1)</span></li>
        <li class="l2"><svg class="ex"><use href="#plus"/></svg><svg class="ic"><use href="#tbc"/></svg><span>BCs (1)</span></li>
        <li class="l2"><i class="ex"></i><svg class="ic"><use href="#tpre"/></svg><span>Predefined Fields</span></li>
        <li class="l2"><i class="ex"></i><svg class="ic"><use href="#trem"/></svg><span>Remeshing Rules</span></li>
        <li class="l2"><i class="ex"></i><svg class="ic"><use href="#topt"/></svg><span>Optimization Tasks</span></li>
        <li class="l2"><i class="ex"></i><svg class="ic"><use href="#tsk"/></svg><span>Sketches</span></li>
        <li class="l0"><i class="ex"></i><svg class="ic"><use href="#tann"/></svg><span>Annotations</span></li>
        <li class="l0"><svg class="ex"><use href="#minus"/></svg><svg class="ic"><use href="#tana"/></svg><span>Analysis</span></li>
        <li class="l1"><i class="ex"></i><svg class="ic"><use href="#tjob"/></svg><span>Jobs</span></li>
        <li class="l1"><i class="ex"></i><svg class="ic"><use href="#tada"/></svg><span>Adaptivity Processes</span></li>
        <li class="l1"><i class="ex"></i><svg class="ic"><use href="#tcoe"/></svg><span>Co-executions</span></li>
        <li class="l1"><i class="ex"></i><svg class="ic"><use href="#topt"/></svg><span>Optimization Processes</span></li>
      </ul>
      <div class="hscroll"><button aria-label="Scroll left"><svg viewBox="0 0 8 8"><path d="M5.500 1l-3 3 3 3" fill="none" stroke="#333" stroke-width="1.300"/></svg></button><i class="thumb"></i><button aria-label="Scroll right"><svg viewBox="0 0 8 8"><path d="M2.500 1l3 3-3 3" fill="none" stroke="#333" stroke-width="1.300"/></svg></button></div>
    </div>
  </aside>

  <section class="right">
    <form class="context">
      <label for="module">Module:</label><span class="combo c-mod"><svg class="spin"><use href="#spin"/></svg><select id="module"><option>Mesh</option></select><svg class="arrow"><use href="#chev"/></svg></span>
      <label for="model">Model:</label><span class="combo c-model"><svg class="spin gray"><use href="#spin"/></svg><select id="model"><option>Model-1</option></select><svg class="arrow"><use href="#chev"/></svg></span>
      <span>Object:</span>
      <label class="radio"><input type="radio" name="obj" checked>Assembly</label>
      <label class="radio"><input type="radio" name="obj">Part:</label>
      <span class="combo c-part"><svg class="spin gray"><use href="#spin"/></svg><select aria-label="Part" disabled><option></option></select><svg class="arrow"><use href="#chev"/></svg></span>
    </form>
    <div class="canvasrow">
      <div class="toolbox" aria-label="Mesh toolbox">
        <div class="tg"><button aria-label="Seed part"><svg><use href="#seed"/></svg></button><button aria-label="Seed edges"><svg><use href="#seed2"/></svg></button><button class="on" aria-label="Mesh part"><svg><use href="#meshL"/></svg></button><button class="on" aria-label="Mesh controls"><svg><use href="#meshred"/></svg></button><button aria-label="Associate mesh"><svg><use href="#assoc"/></svg></button><button aria-label="Stack direction"><svg><use href="#stack"/></svg></button><button aria-label="Element size"><svg><use href="#meshnum"/></svg></button><button aria-label="Verify mesh"><svg><use href="#meshok"/></svg></button><button aria-label="Bottom-up mesh"><svg><use href="#brick"/></svg></button></div>
        <div class="tg"><button aria-label="Copy mesh"><svg><use href="#copy"/></svg></button><button aria-label="Mesh manager"><svg><use href="#form"/></svg></button></div>
        <div class="tg"><button aria-label="Create part"><svg><use href="#goldr"/></svg></button><button aria-label="Move"><svg><use href="#golda"/></svg></button><button aria-label="Erase"><svg><use href="#erase"/></svg></button></div>
        <div class="tg"><button aria-label="Partition edge"><svg><use href="#pick"/></svg></button><button aria-label="Partition face"><svg><use href="#goldL"/></svg></button><button aria-label="Partition cell"><svg><use href="#goldb"/></svg></button><button aria-label="Cut"><svg><use href="#cut"/></svg></button></div>
        <div class="tg"><button aria-label="Datum point"><svg><use href="#xyz"/></svg></button><button aria-label="Datum axis"><svg><use href="#datum"/></svg></button><button aria-label="Datum plane"><svg><use href="#plane"/></svg></button><button aria-label="Datum system"><svg><use href="#dots"/></svg></button></div>
        <div class="tg"><button aria-label="Repair"><svg><use href="#bridge"/></svg></button><button aria-label="Combine faces"><svg><use href="#block"/></svg></button><button aria-label="Virtual topology"><svg><use href="#loop"/></svg></button></div>
        <div class="tg last"><button aria-label="Edit mesh"><svg><use href="#tools"/></svg></button></div>
      </div>
      <div class="viewport">
        <svg viewBox="218 109 1062 518" role="img" aria-label="Plate with three holes">
          <path d="M359 134h784v471H359zM725 212a26 26 0 1 0 52 0a26 26 0 1 0-52 0zM411 527a26 26 0 1 0 52 0a26 26 0 1 0-52 0zM1039 527a26 26 0 1 0 52 0a26 26 0 1 0-52 0z" fill="#00b800" fill-rule="evenodd"/>
          <g fill="#dfa3a6" fill-rule="evenodd" stroke="#3c2626">
            <path d="M672.500 134.500h157v157h-157zM725 212a26 26 0 1 0 52 0a26 26 0 1 0-52 0z"/>
            <path d="M358.500 448.500h157v157h-157zM411 527a26 26 0 1 0 52 0a26 26 0 1 0-52 0z"/>
            <path d="M986.500 448.500h157v157h-157zM1039 527a26 26 0 1 0 52 0a26 26 0 1 0-52 0z"/>
          </g>
          <path d="M358.500 134.500h784.500v471H358.500zM515.500 134v471M986.500 134v471M515 291.500h471M359 448.500h784" fill="none" stroke="#0d3b12"/>
          <g fill="none" stroke="#4a2c2e">
            <path id="ring" transform="translate(751 212)" d="M1-52L22-47 39-35 49-17 52 2 47 22 35 39 18 49-1 52-22 48-38 36-49 18-52-1-47-22-35-39-18-49z"/>
            <use href="#ring" x="-314" y="315"/><use href="#ring" x="314" y="315"/>
          </g>
          <g stroke="#e2e23c" fill="none"><path d="M747.500 208.500l7 7M754.500 208.500l-7 7" stroke-width=".8"/><path d="M358.500 605V568M358.500 605l13-37M358.500 605l-36-11" stroke="#f0d020"/><path d="M359 605.500h38" stroke="#f0b020"/></g>
          <g class="ytxt"><text x="754" y="212">RP-1</text><text x="358" y="567">Y</text><text x="371" y="568">X</text><text x="319" y="594">Y</text><text x="399" y="606">X</text><text x="349" y="611">Z</text><text x="1219" y="118">Y</text><text x="1245" y="152">X</text></g>
          <path d="M1222.500 129c11 0 18 9 18 20h-18z" fill="#10607c" stroke="#c6cdf0" stroke-width="1.500"/>
          <path d="M1222.500 123v42M1212 166.500h26" stroke="#c6c8ee" stroke-width="1.500"/>
          <circle cx="1222.500" cy="123" r="2" fill="#d7dcfa"/><circle cx="1222.500" cy="166.500" r="2.500" fill="#e01616"/><text class="yz" x="1220" y="151">Z</text>
          <path d="M301.500 559h4v18h-4z" fill="#0a9a1c"/><path d="M303.500 549l5 11h-10z" fill="#12a020"/>
          <path d="M307 578.500h17v4h-17z" fill="#c01414"/><path d="M334 580.500l-11-5v10z" fill="#b01010"/>
          <circle cx="303.500" cy="580.500" r="5" fill="#0c12a8"/>
          <g class="wtxt"><text x="303" y="542">Y</text><text x="343" y="583">X</text><text x="303" y="584">Z</text></g>
          <circle cx="776" cy="539.500" r="5" fill="none" stroke="#1f7fe0" stroke-width="2.600"/><path d="M776 534.500a5 5 0 0 1 5 5" fill="none" stroke="#2fa0ee" stroke-width="2.600"/>
        </svg>
      </div>
    </div>
    <div class="prompt">
      <button class="stop">Stop</button><span>Generating region meshes: 10 of 12 regions complete</span>
      <div class="progress" role="progressbar" aria-valuenow="83" aria-valuemin="0" aria-valuemax="100"><i style="width:83%"></i><span>83%</span></div>
      <div class="brand"><svg viewBox="0 0 14 14"><path d="M4 2c4-2 5 0 2 3M1 13c1-5 5-7 5-3s-4 4-5 3M13 5c-4-1-5 2-3 4s0 5-3 4" fill="none" stroke="#1d8f9a" stroke-width="1.300"/></svg><b>SIMULIA</b></div>
    </div>
  </section>
</main>

<section class="messages">
  <div class="mtabs"><button class="active" aria-label="Message area"><svg viewBox="0 0 16 16"><path d="M2.500 1.500h12v13h-12z" fill="#e8e4da" stroke="#777"/><path d="M14 2L5 12v2h9z" fill="#b8b4aa"/><path d="M1 15l6-6" stroke="#6f6a28" stroke-width="3"/></svg></button><button aria-label="Command line"><svg viewBox="0 0 16 16"><path d="M.5 .5h15v15H.5z" fill="#f5e56b" stroke="#555"/><path d="M2 5l3 3-3 3M6.500 5l3 3-3 3M11 5l3 3-3 3" fill="none" stroke="#222" stroke-width="1.300"/></svg></button></div>
  <pre class="log">Application restarted after 118 minutes of idle time; the license will be checked within the next 3 minutes.
Global seeds have been assigned.
Global seeds have been assigned.</pre>
  <svg class="sizer" viewBox="0 0 10 10"><path d="M8 2h1M5 5h1M8 5h1M2 8h1M5 8h1M8 8h1" stroke="#999"/></svg>
</section>

<footer class="taskbar">
  <div class="apps">
    <button aria-label="Start"><svg viewBox="0 0 16 16"><path d="M2 3.500l5-1v5H2zM8 2.300l6-1v6.200H8zM2 8.500h5v5l-5-1zM8 8.500h6v6.200l-6-1z" fill="#fff"/></svg></button>
    <button aria-label="Search"><svg viewBox="0 0 16 16"><circle cx="9.500" cy="6" r="4" fill="none" stroke="#fff" stroke-width="1.400"/><path d="M7 9l-5 5" stroke="#fff" stroke-width="1.400"/></svg></button>
    <button aria-label="Cortana"><svg viewBox="0 0 16 16"><circle cx="8" cy="8" r="5" fill="none" stroke="#fff" stroke-width="1.800"/></svg></button>
    <button aria-label="Task view"><svg viewBox="0 0 16 16"><path d="M2.500 5.500h7v5h-7zM2.500 1v2h7V1M2.500 15v-2h7v2M13 1v14M12 6h2" fill="none" stroke="#fff" stroke-width="1.300"/></svg></button>
    <button class="mail" aria-label="Mail"><svg viewBox="0 0 16 16"><path d="M0 5l8-5 8 5v10H0z" fill="#1673bd"/><path d="M2 4h12v5l-6 3-6-3z" fill="#eef6fc"/><path d="M0 6l8 6 8-6v9H0z" fill="#2494dc"/></svg><span class="badge">99+</span></button>
    <button aria-label="WeChat"><svg viewBox="0 0 16 16"><ellipse cx="6" cy="6" rx="6" ry="5" fill="#6ac24a"/><path d="M2 9l-1 4 4-2z" fill="#6ac24a"/><ellipse cx="11" cy="10.500" rx="5" ry="4" fill="#e8f0e4"/><path d="M4 4.500h1M8 4.500h1M9 9.500h1M12 9.500h1" stroke="#333" stroke-width="1.300"/></svg></button>
    <button class="run" aria-label="File Explorer"><svg viewBox="0 0 16 16"><path d="M1 2h6l1 2h7v11H1z" fill="#f3c34a"/><path d="M3 8h10v7h-3v-3H6v3H3z" fill="#2e86c9"/></svg></button>
    <button class="run" aria-label="Chrome"><svg viewBox="0 0 16 16"><circle cx="8" cy="8" r="7.500" fill="#f2c32e"/><path d="M8 8L1.500 4.200A7.500 7.500 0 0 1 14.500 4.200z" fill="#db4437"/><path d="M1.500 4.200L8 15.500A7.500 7.500 0 0 1 1.500 4.200z" fill="#169e57"/><circle cx="8" cy="8" r="3.500" fill="#3f82ee" stroke="#fff"/></svg></button>
    <button class="run" aria-label="Snipping Tool"><svg viewBox="0 0 16 16"><ellipse cx="9" cy="6" rx="6.500" ry="5.500" fill="#f0e4e6" stroke="#b7999d"/><path d="M4 9l8-5" stroke="#c33a45" stroke-width="1.500"/><circle cx="3" cy="12" r="2" fill="none" stroke="#c33" stroke-width="1.300"/><path d="M9 11l5 4" stroke="#5a8cc6" stroke-width="2"/></svg></button>
    <button class="run" aria-label="Steam"><svg viewBox="0 0 16 16"><circle cx="8" cy="8" r="7.500" fill="#17497f"/><circle cx="10.500" cy="6" r="3" fill="none" stroke="#fff" stroke-width="1.500"/><path d="M1 9l5 2.500 3-3" fill="none" stroke="#fff" stroke-width="2"/><circle cx="5.500" cy="11.500" r="2" fill="#fff"/></svg></button>
    <button class="run" aria-label="Command Prompt"><svg viewBox="0 0 16 16"><path d="M.5 2.500h15v12H.5z" fill="#050505" stroke="#999"/><path d="M0 2h16v2H0z" fill="#ccc"/><path d="M2 6l2 1-2 1M5 8h3M9 7h2" fill="none" stroke="#ddd"/></svg></button>
    <button class="run now" aria-label="Abaqus/CAE"><svg viewBox="0 0 16 16"><path d="M8 0l4 6v4l-4 6-4-6V6z" fill="#8577b5"/><path d="M0 8h16" stroke="#e8e6f4" stroke-width="2"/></svg></button>
    <button class="run" aria-label="PowerPoint"><svg viewBox="0 0 16 16"><circle cx="9" cy="8" r="7" fill="#d35230"/><path d="M9 1a7 7 0 0 1 7 7H9z" fill="#f08f6c"/><path d="M0 4h9v9H0z" fill="#b9381a"/><text x="4.500" y="11.500" font-size="8" font-weight="bold" text-anchor="middle" fill="#fff">P</text></svg></button>
    <button class="run" aria-label="Zoom"><svg viewBox="0 0 16 16"><circle cx="8" cy="8" r="8" fill="#3b86f3"/><path d="M3 5.500h6.500v5H3zM10 7.500l3-2v5l-3-2z" fill="#fff"/></svg></button>
  </div>
  <div class="clock"><time>1:29 AM</time><time>4/29/2020</time></div>
</footer>
</body>
</html>
```
FILE: styles.css
```css
* { box-sizing: border-box; }

html, body { height: 100%; }

body {
  margin: 0;
  display: flex;
  flex-direction: column;
  overflow: hidden;
  background: #f4f4f4;
  color: #1c1c1c;
  font: 8px/12px Roboto, "Open Sans", sans-serif;
}

button, select, input {
  margin: 0;
  padding: 0;
  border: 0;
  background: none;
  color: inherit;
  font: inherit;
}

button { display: flex; align-items: center; justify-content: center; }
svg { display: block; flex: none; }
.defs { display: none; }
.i10 { width: 10px; height: 10px; }
.i11 { width: 11px; height: 11px; }

/* Title and menus */
.titlebar {
  flex: none;
  display: flex;
  align-items: center;
  height: 15px;
  padding-left: 1px;
  gap: 3px;
  background: #fff;
}
.titlebar h1 { margin: 0; font-size: 8px; font-weight: 400; }
.winbtns { display: flex; margin-left: auto; padding-right: 2px; }
.winbtns button { width: 30px; height: 13px; }
.winbtns svg { width: 8px; height: 8px; }

.menubar {
  flex: none;
  display: flex;
  align-items: center;
  height: 16px;
  padding-left: 3px;
  background: linear-gradient(90deg, #fcfcfc, #f2f2f2);
  border-bottom: 1px solid #dcdcdc;
}
.menubar > svg { margin-right: 2px; }
.menubar > button { padding: 0 5px; }
.mdibtns { display: flex; margin-left: auto; }
.mdibtns button { width: 14px; height: 12px; background: #fff; }
.mdibtns svg { width: 7px; height: 7px; }

/* Toolbars */
.toolbars {
  flex: none;
  background: linear-gradient(90deg, #fff 0, #fdfdfd 30%, #f7f7f7 55%, #efefef 75%);
}
.tbrow { display: flex; height: 19px; }
.tb {
  flex: none;
  display: flex;
  align-items: center;
  background: #fafafa;
  border-right: 1px solid #c9c9c9;
  border-bottom: 1px solid #c9c9c9;
}
.tb button { flex: 1; height: 17px; min-width: 0; }
.tb svg { width: 14px; height: 14px; }
.tb .slim { flex: none; width: 12px; }
.tb svg.car { width: 5px; height: 9px; }
.tb .on { background: #c5daf0; }
.tb .warm { background: #fbeedd; }
.grip {
  flex: none;
  width: 1px;
  height: 12px;
  margin: 0 2px;
  background: repeating-linear-gradient(#999 0 1px, #fff 1px 3px);
}
.w22 { width: 22px; }
.w41 { width: 41px; }
.w58 { width: 58px; }
.w110 { width: 110px; }
.w140 { width: 140px; }
.w145 { width: 145px; }
.w180 { width: 180px; }
.w212 { width: 212px; }
.w216 { width: 216px; }
.from-file { margin-left: 76px; }
.from-view { margin-left: 146px; }
.from-render { margin-left: 18px; }
.from-edge { margin-left: 210px; }
.from-annot { margin-left: 389px; }
.from-far { margin-left: 428px; }
.num { color: #c22a1e; font: bold 12px/14px "Liberation Sans", sans-serif; }
.ax { fill: #b5382d; font: bold 7px "Liberation Sans", sans-serif; }

.combo {
  display: flex;
  align-items: center;
  height: 16px;
  background: #fff;
  border: 1px solid #a3a3a3;
}
.combo select {
  flex: 1;
  min-width: 0;
  height: 100%;
  padding-left: 2px;
  appearance: none;
  opacity: 1;
}
.combo .arrow {
  width: 8px;
  height: 100%;
  background: #e1e1e1;
  outline: 1px solid #bdbdbd;
}
.blue { width: 70px; background: #b0caee; border-color: #b0caee; }
.blue .arrow { background: #b9c6dc; }
.wide { width: 89px; }
.spin { width: 5px; height: 12px; color: #222; }
.gray { color: #8d8d8d; }

/* Main area */
.work { flex: 1; min-height: 0; display: flex; }

.side {
  flex: none;
  width: 174px;
  display: flex;
  flex-direction: column;
  padding: 4px 3px 1px 1px;
  background: #fbfbfb;
}
.tabs { display: flex; height: 17px; }
.tab { padding: 0 5px; background: #e9e9e9; border: 1px solid #dedede; }
.tab.active { padding: 0 6px; background: #fff; border-bottom-color: #fff; }
.dbrow { display: flex; align-items: center; height: 20px; gap: 2px; padding-left: 2px; }
.dbrow button { width: 15px; height: 14px; }
.db { width: 103px; height: 15px; padding-left: 2px; margin-right: -1px; }

.treebox {
  flex: 1;
  min-height: 0;
  display: flex;
  flex-direction: column;
  margin-left: 2px;
  background: #fff;
  border: 1px solid #a9a9a9;
}
.tree {
  flex: 1;
  min-height: 0;
  overflow: hidden;
  margin: 0;
  padding: 0;
  list-style: none;
}
.tree li {
  display: flex;
  align-items: center;
  height: 13px;
  white-space: nowrap;
  background: repeating-linear-gradient(#ccc 0 1px, #fff 1px 2px) 4px 0 / 1px 100% no-repeat;
}
.tree li:nth-child(3n) { height: 12px; }
.tree .l0 { padding-left: 1px; }
.tree .l1 { padding-left: 13px; }
.tree .l2 { padding-left: 24px; }
.tree .l2 {
  background:
    repeating-linear-gradient(#ccc 0 1px, #fff 1px 2px) 4px 0 / 1px 100% no-repeat,
    repeating-linear-gradient(#ccc 0 1px, #fff 1px 2px) 27px 0 / 1px 100% no-repeat;
}
.tree .l1 { background: repeating-linear-gradient(#ccc 0 1px, #fff 1px 2px) 16px 0 / 1px 100% no-repeat; }
.ex { width: 7px; height: 7px; margin-right: 2px; flex: none; }
.ic { width: 11px; height: 11px; margin-right: 1px; }
.tree span { padding: 0 1px; }
.tree .current { padding: 0; line-height: 10px; border-bottom: 1px solid #222; }
.tree .sel { background: #0a78d7; color: #fff; }

.hscroll { flex: none; display: flex; height: 12px; background: #f3f3f3; }
.hscroll button { width: 11px; }
.hscroll svg { width: 8px; height: 8px; }
.thumb { flex: 1; background: #cdcdcd; }

.right { flex: 1; min-width: 0; display: flex; flex-direction: column; }
.context {
  flex: none;
  display: flex;
  align-items: center;
  height: 21px;
  margin: 0;
  padding: 0 0 1px 5px;
  gap: 4px;
  background: linear-gradient(#fff, #f3f3f3);
}
.context .combo { height: 15px; }
.c-mod { width: 71px; margin-right: 6px; }
.c-model { width: 58px; margin-right: 6px; }
.c-part { width: 58px; }
.c-part .arrow { background: #c9c9c9; }
.radio { display: flex; align-items: center; gap: 3px; }
.radio input {
  appearance: none;
  width: 9px;
  height: 9px;
  border: 1px solid #444;
  border-radius: 50%;
  background: #fff;
}
.radio input:checked { background: radial-gradient(#222 0 2px, #fff 3px); }

.canvasrow { flex: 1; min-height: 0; display: flex; }
.toolbox {
  flex: none;
  width: 44px;
  padding: 0 3px 0 1px;
  background: linear-gradient(90deg, #fcfcfc, #ececec);
}
.tg {
  display: grid;
  grid-template-columns: 19px 19px;
  grid-auto-rows: 19px;
  padding: 2px 0 1px 1px;
  border-bottom: 1px solid #bcbcbc;
}
.tg.last { border: 0; padding-top: 4px; }
.tg .on { background: #cde3f7; }
.tg svg { width: 15px; height: 15px; }

.viewport {
  flex: 1;
  min-width: 0;
  background: linear-gradient(#1b2b47 0, #1f304c 20%, #273955 35%, #34476a 55%, #4a5d7c 67%, #6c7d99 82%, #8e9cb7 94%, #9aa7c1 100%);
}
.viewport svg { width: 100%; height: 100%; }
.ytxt { fill: #e6e034; font: 7px "Liberation Sans", sans-serif; }
.yz { fill: #e6e034; font: 6px "Liberation Sans", sans-serif; }
.wtxt { fill: #fff; font: bold 9px "Liberation Sans", sans-serif; text-anchor: middle; }

.prompt {
  flex: none;
  display: flex;
  align-items: center;
  height: 23px;
  padding: 0 2px 0 4px;
  gap: 4px;
  background: linear-gradient(90deg, #fff, #f2f2f2 40%, #fff);
}
.stop { height: 14px; padding: 0 1px; background: #e3e3e3; border: 1px solid #b5b5b5; }
.progress {
  position: relative;
  width: 66px;
  height: 15px;
  margin-left: auto;
  padding: 1px;
  background: #ececec;
  border: 1px solid #c4c4c4;
}
.progress i { display: block; height: 100%; background: #069a20; }
.progress span { position: absolute; inset: 0 0 0 6px; text-align: center; color: #064d10; }
.brand { display: flex; align-items: center; margin-left: 13px; gap: 4px; color: #1d8f9a; }
.brand svg { width: 14px; height: 14px; }
.brand b { font: italic 12px/14px "DejaVu Sans", sans-serif; }

/* Messages */
.messages { flex: none; display: flex; height: 44px; padding: 3px 2px 2px 1px; background: #f1f1f1; }
.mtabs { width: 26px; overflow: hidden; }
.mtabs button { width: 25px; height: 24px; }
.mtabs .active { background: #fff; }
.mtabs svg { width: 15px; height: 15px; }
.log {
  flex: 1;
  margin: 0;
  padding: 2px;
  overflow: hidden;
  background: #fff;
  border: 1px solid #a5a5a5;
  font: 9px/9px "Liberation Mono", monospace;
}
.sizer { width: 10px; height: 10px; align-self: flex-end; }

/* Taskbar */
.taskbar {
  flex: none;
  display: flex;
  justify-content: space-between;
  height: 26px;
  background: linear-gradient(90deg, #0e0e0e 0, #222 10%, #3c3c3c 22%, #484848 38%, #484848 88%, #1d1d1d 95%, #191919);
  color: #fff;
}
.apps { display: grid; grid-template-columns: repeat(14, 1fr); width: 456px; }
.apps svg { width: 15px; height: 15px; }
.run { border-bottom: 1px solid #5f8fc0; border-left: 3px solid transparent; border-right: 3px solid transparent; }
.now { background: #6b6b6b; }
.mail { position: relative; }
.badge {
  position: absolute;
  right: 1px;
  bottom: 2px;
  padding: 0 2px;
  border: 1px solid #8d9499;
  border-radius: 6px;
  background: #20272d;
  font-size: 8px;
  font-weight: 700;
  line-height: 10px;
}
.clock {
  display: flex;
  flex-direction: column;
  justify-content: center;
  align-items: center;
  padding-right: 4px;
}
```
